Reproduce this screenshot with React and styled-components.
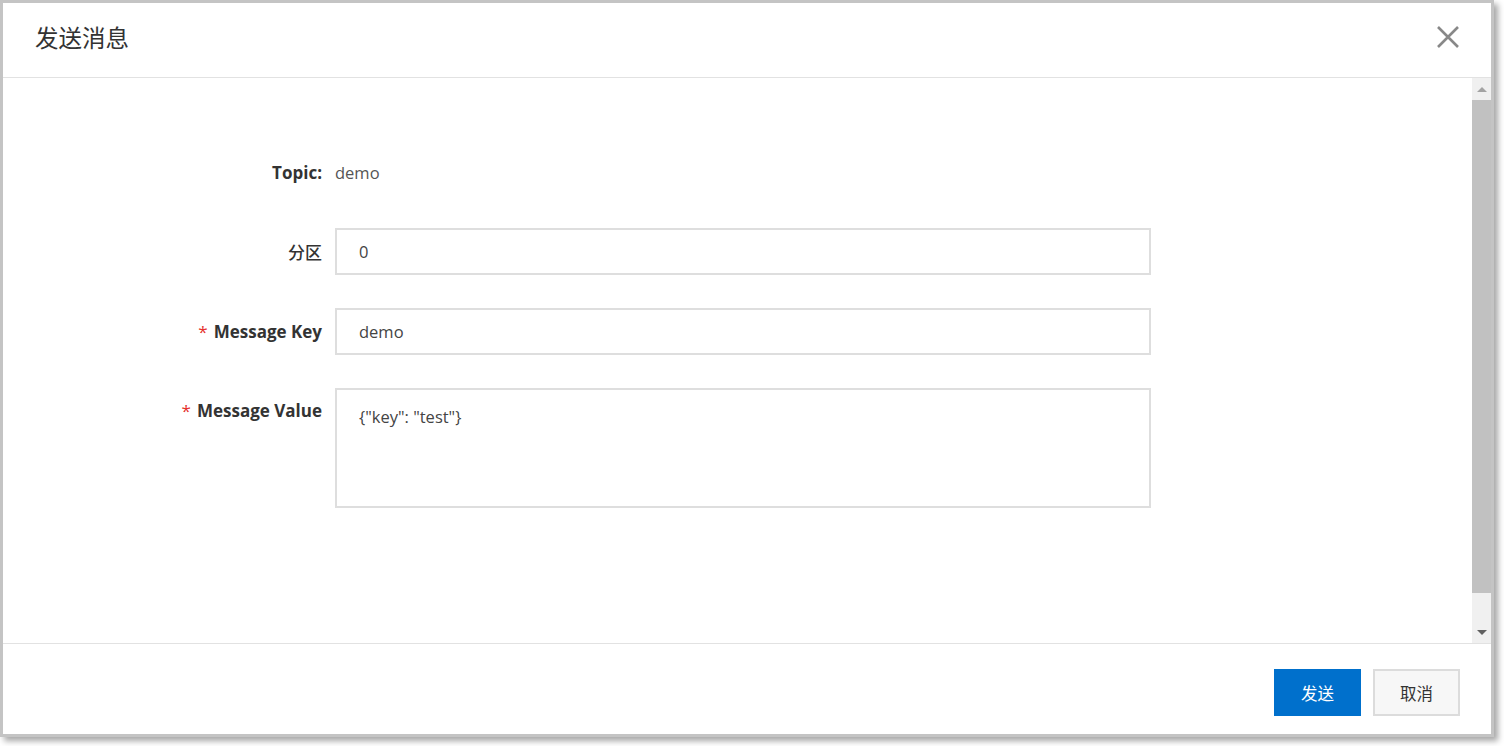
import React from 'react'
import styled, { createGlobalStyle } from 'styled-components'

const GlobalStyle = createGlobalStyle`
  html, body {
    margin: 0;
    padding: 0;
    background: #ffffff;
  }
  body {
    font-family: "Open Sans", "Noto Sans CJK SC", sans-serif;
    color: #333333;
    min-height: 746px;
  }
`

const Dialog = styled.div`
  width: 1494px;
  height: 737px;
  box-sizing: border-box;
  border: 3px solid #c4c4c4;
  background: #ffffff;
  box-shadow: 4px 4px 6px rgba(0, 0, 0, 0.35);
  display: flex;
  flex-direction: column;
`

const Header = styled.div`
  height: 74px;
  flex: none;
  display: flex;
  align-items: center;
  justify-content: space-between;
  padding: 0 31px 0 32px;
  border-bottom: 1px solid #e2e2e2;
`

const Title = styled.h2`
  margin: 0 0 6px;
  font-family: "Noto Sans CJK SC", sans-serif;
  font-weight: 400;
  font-size: 23.5px;
  color: #333333;
`

const CloseButton = styled.button`
  border: 0;
  background: none;
  padding: 0;
  width: 24px;
  height: 24px;
  margin-bottom: 6px;
  cursor: pointer;
  display: flex;
  align-items: center;
  justify-content: center;
`

const Body = styled.div`
  height: 565px;
  flex: none;
  display: flex;
  border-bottom: 1px solid #e2e2e2;
`

const Content = styled.div`
  flex: 1;
  padding-top: 71px;
`

const Row = styled.div`
  display: grid;
  grid-template-columns: 319px 816px;
  column-gap: 13px;
  align-items: ${p => (p.$top ? 'start' : 'center')};
  min-height: 46px;
  margin-bottom: 33px;
`

const Label = styled.label`
  text-align: right;
  font-weight: 700;
  font-size: 17px;
  color: #333333;
  padding-top: ${p => (p.$top ? '11px' : '0')};
  white-space: nowrap;
`

const CjkLabel = styled(Label)`
  font-family: "Noto Sans CJK SC", sans-serif;
  font-weight: 500;
`

const Required = styled.span`
  color: #e5302b;
  margin-right: 6px;
  font-weight: 400;
`

const Static = styled.span`
  font-size: 16.5px;
  color: #555555;
`

const Input = styled.input`
  box-sizing: border-box;
  width: 816px;
  height: 47px;
  border: 2px solid #dedede;
  padding: 0 22px;
  font-family: "Open Sans", "Noto Sans CJK SC", sans-serif;
  font-size: 16.5px;
  color: #444444;
  outline: none;
  background: #ffffff;
`

const TextArea = styled.textarea`
  box-sizing: border-box;
  width: 816px;
  height: 120px;
  border: 2px solid #dedede;
  padding: 15px 22px;
  font-family: "Open Sans", "Noto Sans CJK SC", sans-serif;
  font-size: 16.5px;
  color: #444444;
  outline: none;
  resize: none;
`

const ScrollBar = styled.div`
  width: 19px;
  flex: none;
  background: #f0f0f0;
  display: flex;
  flex-direction: column;
  align-items: center;
`

const Arrow = styled.div`
  height: 22px;
  flex: none;
  display: flex;
  align-items: center;
  justify-content: center;
  width: 100%;
`

const Triangle = styled.div`
  width: 0;
  height: 0;
  border-left: 5px solid transparent;
  border-right: 5px solid transparent;
  ${p =>
    p.$down
      ? 'border-top: 5px solid #606060;'
      : 'border-bottom: 5px solid #a3a3a3;'}
`

const Thumb = styled.div`
  width: 100%;
  height: 493px;
  background: #c1c1c1;
  flex: none;
`

const Track = styled.div`
  flex: 1;
`

const Footer = styled.div`
  flex: 1;
  display: flex;
  justify-content: flex-end;
  align-items: flex-start;
  gap: 12px;
  padding: 25px 31px 0 0;
`

const Button = styled.button`
  width: 87px;
  height: 47px;
  box-sizing: border-box;
  font-family: "Noto Sans CJK SC", sans-serif;
  font-size: 16.5px;
  cursor: pointer;
  border: ${p => (p.$primary ? '0' : '2px solid #dcdcdc')};
  background: ${p => (p.$primary ? '#0070cc' : '#f7f7f7')};
  color: ${p => (p.$primary ? '#ffffff' : '#333333')};
`

const CloseIcon = () => (
  <svg width="22" height="22" viewBox="0 0 22 22">
    <path d="M1 1L21 21M21 1L1 21" stroke="#888888" strokeWidth="2.6" />
  </svg>
)

export default function App() {
  return (
    <>
      <GlobalStyle />
      <Dialog>
        <Header>
          <Title>发送消息</Title>
          <CloseButton aria-label="关闭">
            <CloseIcon />
          </CloseButton>
        </Header>
        <Body>
          <Content>
            <Row>
              <Label>Topic:</Label>
              <Static>demo</Static>
            </Row>
            <Row>
              <CjkLabel>分区</CjkLabel>
              <Input defaultValue="0" />
            </Row>
            <Row>
              <Label>
                <Required>*</Required>Message Key
              </Label>
              <Input defaultValue="demo" />
            </Row>
            <Row $top>
              <Label $top>
                <Required>*</Required>Message Value
              </Label>
              <TextArea defaultValue={'{"key": "test"}'} />
            </Row>
          </Content>
          <ScrollBar>
            <Arrow>
              <Triangle />
            </Arrow>
            <Thumb />
            <Track />
            <Arrow>
              <Triangle $down />
            </Arrow>
          </ScrollBar>
        </Body>
        <Footer>
          <Button $primary>发送</Button>
          <Button>取消</Button>
        </Footer>
      </Dialog>
    </>
  )
}
